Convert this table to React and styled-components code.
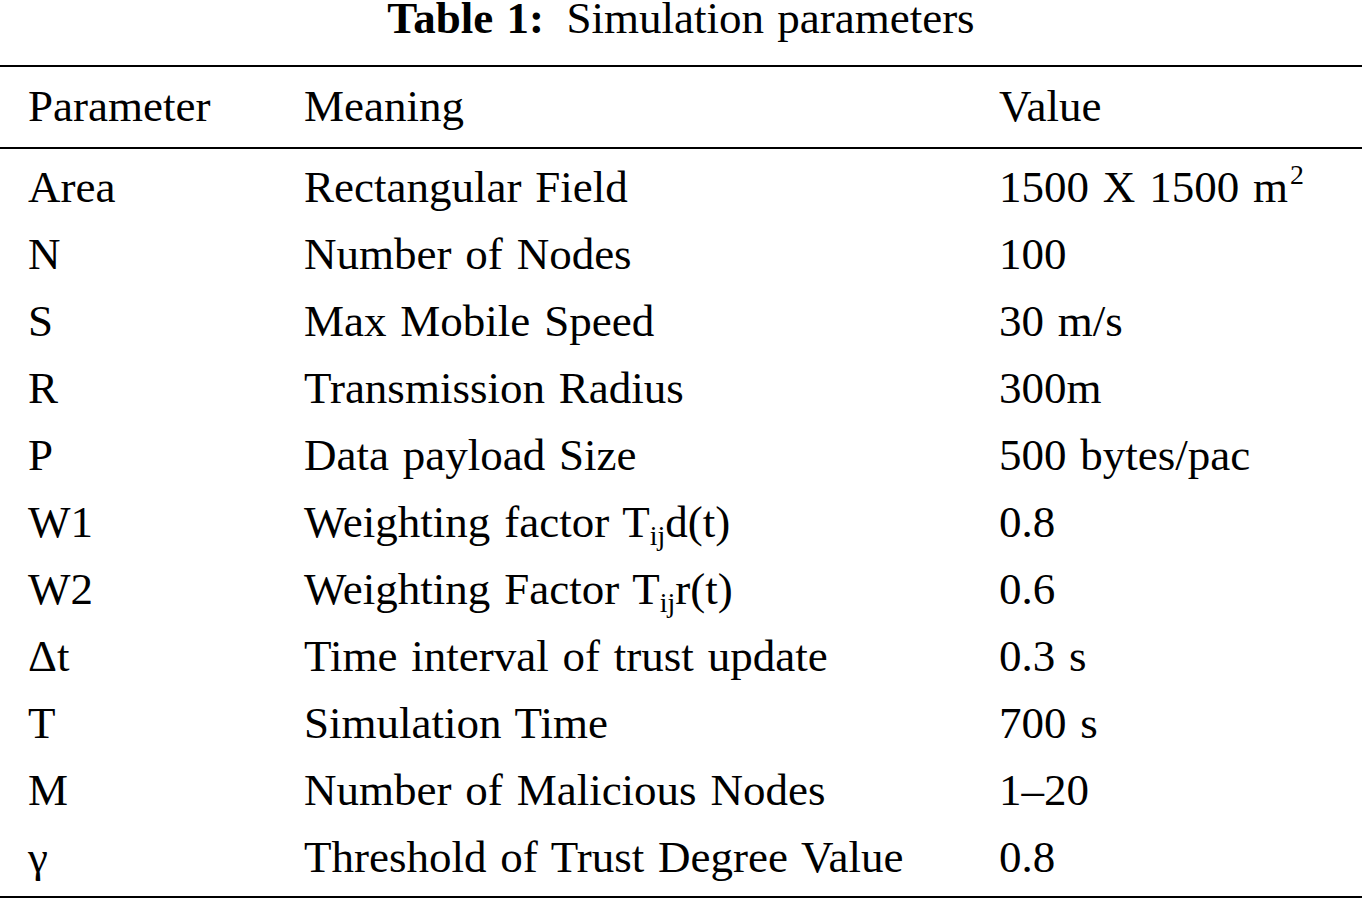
import React from "react";
import styled, { createGlobalStyle } from "styled-components";

const Global = createGlobalStyle`
  html, body { margin: 0; padding: 0; background: #fff; }
  body { font-family: "Liberation Serif", "Times New Roman", serif; color: #000; }
`;

const Page = styled.div`
  width: 1362px;
  display: flex;
  flex-direction: column;
`;

const Caption = styled.div`
  font-size: 45px;
  line-height: 50px;
  margin-top: -7px;
  margin-bottom: 22px;
  text-align: center;
  white-space: nowrap;
  word-spacing: 2px;
`;

const CaptionLabel = styled.b`
  font-weight: 700;
  margin-right: 0.5em;
`;

const Rule = styled.div`
  height: 2px;
  background: #000;
`;

const Section = styled.div`
  display: flex;
  flex-direction: column;
  padding: ${(p) => p.$pad};
`;

const Row = styled.div`
  display: grid;
  grid-template-columns: 276px 695px 1fr;
  padding-left: 28px;
  font-size: 45px;
  line-height: 67px;
  height: 67px;
  white-space: nowrap;
  word-spacing: 2.6px;
`;

const Cell = styled.div``;

const Sub = styled.sub`
  font-size: 0.62em;
  line-height: 0;
  vertical-align: -0.3em;
`;

const Sup = styled.sup`
  font-size: 0.62em;
  line-height: 0;
  vertical-align: 0.66em;
  margin-left: 2px;
`;

const rows = [
  ["Area", "Rectangular Field", <>1500 X 1500 m<Sup>2</Sup></>],
  ["N", "Number of Nodes", "100"],
  ["S", "Max Mobile Speed", "30 m/s"],
  ["R", "Transmission Radius", "300m"],
  ["P", "Data payload Size", "500 bytes/pac"],
  ["W1", <>Weighting factor T<Sub>ij</Sub>d(t)</>, "0.8"],
  ["W2", <>Weighting Factor T<Sub>ij</Sub>r(t)</>, "0.6"],
  ["\u0394t", "Time interval of trust update", "0.3 s"],
  ["T", "Simulation Time", "700 s"],
  ["M", "Number of Malicious Nodes", "1\u201320"],
  ["\u03b3", "Threshold of Trust Degree Value", "0.8"],
];

export default function App() {
  return (
    <>
      <Global />
      <Page>
        <Caption>
          <CaptionLabel>Table 1:</CaptionLabel>Simulation parameters
        </Caption>
        <Rule />
        <Section $pad="6px 0 7px">
          <Row>
            <Cell>Parameter</Cell>
            <Cell>Meaning</Cell>
            <Cell>Value</Cell>
          </Row>
        </Section>
        <Rule />
        <Section $pad="5px 0 5px">
          {rows.map((r, i) => (
            <Row key={i}>
              <Cell>{r[0]}</Cell>
              <Cell>{r[1]}</Cell>
              <Cell>{r[2]}</Cell>
            </Row>
          ))}
        </Section>
        <Rule />
      </Page>
    </>
  );
}
